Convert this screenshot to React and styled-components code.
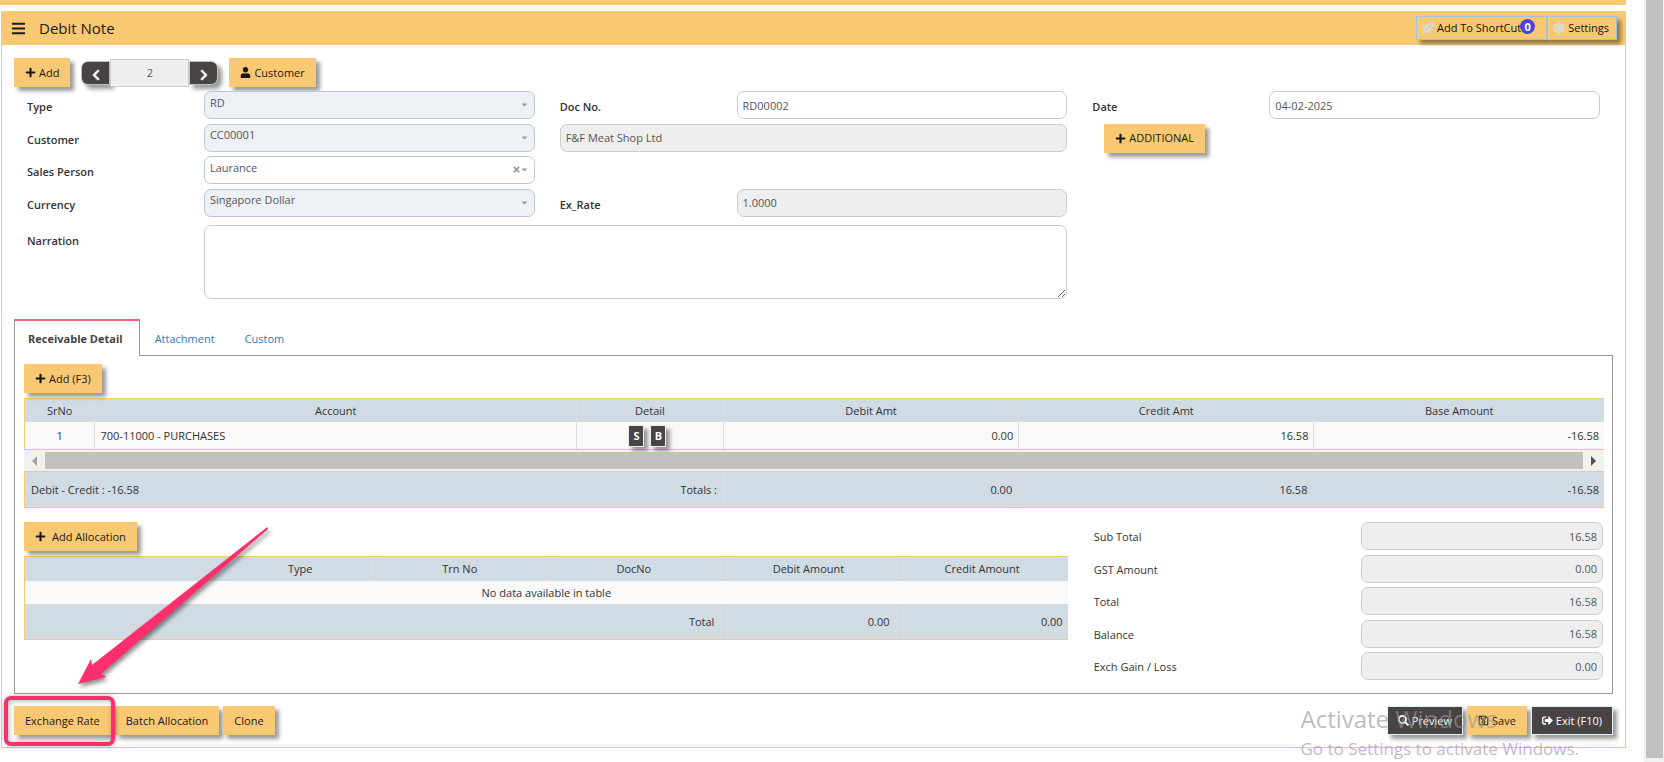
import React, { useState } from 'react';
import styled, { createGlobalStyle, css } from 'styled-components';
import {
  FaBars,
  FaPlus,
  FaUser,
  FaChevronLeft,
  FaChevronRight,
  FaCaretDown,
  FaTimes,
  FaSearch,
  FaRegSave,
  FaSignOutAlt,
} from 'react-icons/fa';
import { LuRocket, LuSettings } from 'react-icons/lu';

const amber = '#f9c872';
const dark = '#494444';

const tabs = ['Receivable Detail', 'Attachment', 'Custom'];

const detailColumns = [
  { title: 'SrNo', width: '4.4%' },
  { title: 'Account', width: '30.5%' },
  { title: 'Detail', width: '9.3%' },
  { title: 'Debit Amt', width: '18.7%' },
  { title: 'Credit Amt', width: '18.7%' },
  { title: 'Base Amount', width: '18.4%' },
];

const allocationColumns = [
  { title: '', width: '19.4%' },
  { title: 'Type', width: '13.9%' },
  { title: 'Trn No', width: '16.7%' },
  { title: 'DocNo', width: '16.7%' },
  { title: 'Debit Amount', width: '16.8%' },
  { title: 'Credit Amount', width: '16.5%' },
];

const detailRows = [
  { account: '700-11000 - PURCHASES', debit: '0.00', credit: '16.58', base: '-16.58' },
];

const summary = [
  { id: 'subTotal', label: 'Sub Total', value: '16.58' },
  { id: 'gstAmount', label: 'GST Amount', value: '0.00' },
  { id: 'total', label: 'Total', value: '16.58' },
  { id: 'balance', label: 'Balance', value: '16.58' },
  { id: 'exchGainLoss', label: 'Exch Gain / Loss', value: '0.00' },
];

const GlobalStyle = createGlobalStyle`
  *, *::before, *::after {
    box-sizing: border-box;
  }

  body {
    margin: 0;
    background: #fff;
    color: #333;
    font-family: "Open Sans", "Noto Sans", sans-serif;
    font-size: 11px;
    line-height: 16px;
  }

  button, input, select, textarea {
    font: inherit;
    color: inherit;
    margin: 0;
  }
`;

const Page = styled.div`
  position: relative;
  display: flex;
  justify-content: space-between;
  min-height: 100vh;
  overflow: hidden;
`;

const Main = styled.main`
  flex: 1;
  min-width: 0;
  margin-right: 18px;
`;

const TopStrip = styled.div`
  height: 5px;
  margin-bottom: 6px;
  background: ${amber};
`;

const Panel = styled.section`
  margin-left: 1px;
  border: 1px solid ${amber};
  border-top: 0;
`;

const PanelHeader = styled.header`
  display: flex;
  align-items: center;
  height: 34px;
  padding: 0 8px 0 9px;
  background: ${amber};
  color: #1a1a1a;
`;

const PanelTitle = styled.h1`
  flex: 1;
  margin: 0 0 0 13px;
  font-size: 15px;
  font-weight: 400;
  line-height: 20px;
`;

const HeaderButton = styled.button`
  position: relative;
  display: flex;
  align-items: center;
  gap: 3px;
  height: 24px;
  padding: 0 ${(p) => (p.$wide ? 25 : 7)}px 0 5px;
  border: 1px solid #9fc5dc;
  background: ${amber};
  color: #111;
  white-space: nowrap;
  box-shadow: 4px 4px 4px rgba(0, 0, 0, 0.4);

  svg {
    flex-shrink: 0;
    width: 12px;
    height: 12px;
    color: #cfe0ea;
    stroke-width: 3px;
  }
`;

const Badge = styled.span`
  position: absolute;
  top: 2px;
  right: 11px;
  width: 15px;
  height: 15px;
  border-radius: 50%;
  background: #4b45d6;
  color: #fff;
  font-weight: 700;
  line-height: 15px;
  text-align: center;
`;

const Button = styled.button`
  display: inline-flex;
  align-items: center;
  gap: ${(p) => (p.$spaced ? 6 : 3)}px;
  height: 29px;
  padding: 0 11px;
  border: 0;
  background: ${amber};
  color: #1a1a1a;
  white-space: nowrap;
  box-shadow: 4px 4px 4px rgba(0, 0, 0, 0.4);

  svg {
    width: 11px;
    height: 11px;
  }

  ${(p) =>
    p.$dark &&
    css`
      padding: 0 10px;
      border: 1px solid #e4eef4;
      background: ${dark};
      color: #fff;
    `}
`;

const Toolbar = styled.div`
  display: flex;
  align-items: center;
  gap: 11px;
  padding: 13px 12px 4px;
`;

const Pager = styled.div`
  display: flex;
  align-items: center;
`;

const PagerButton = styled.button`
  display: flex;
  align-items: center;
  justify-content: center;
  width: 29px;
  height: 24px;
  padding: 4px 0 0;
  border: 1px solid #b9c3d0;
  border-radius: ${(p) => (p.$next ? '0 7px 7px 0' : '7px 0 0 7px')};
  background: ${dark};
  color: #fff;
  box-shadow: 4px 4px 4px rgba(0, 0, 0, 0.4);

  svg {
    width: 12px;
    height: 12px;
    stroke: #fff;
    stroke-width: 30px;
  }
`;

const PagerInput = styled.input`
  position: relative;
  width: 79px;
  height: 28px;
  padding: 0;
  border: 1px solid #ccc;
  background: #eee;
  color: #555;
  text-align: center;
`;

const FormGrid = styled.div`
  display: grid;
  grid-template-columns: repeat(3, minmax(0, 152fr) minmax(0, 331fr));
  grid-template-rows: repeat(4, 1fr) auto;
  gap: 4px 25px;
  min-height: 208px;
  padding: 0 25px;
`;

const Label = styled.label`
  grid-column: ${(p) => p.$col};
  padding-top: ${(p) => (p.$low ? 12 : p.$light ? 7 : 8)}px;
  font-weight: ${(p) => (p.$light ? 500 : 600)};
`;

const fieldBox = css`
  width: 100%;
  height: 28px;
  border: 1px solid #ccc;
  border-radius: 7px;
  background: ${(p) => (p.readOnly ? '#eee' : '#fff')};
  color: #555;
`;

const TextField = styled.input`
  ${fieldBox}
  grid-column: ${(p) => p.$col || 'auto'};
  padding: 0 5px;
  text-align: ${(p) => p.$align || 'left'};
`;

const Narration = styled.textarea`
  ${fieldBox}
  grid-column: 2 / 5;
  display: block;
  height: 74px;
  margin-top: 4px;
  resize: vertical;
`;

const SelectBox = styled.div`
  position: relative;
`;

const Select = styled.select`
  ${fieldBox}
  padding: 0 24px 5px 5px;
  border-color: #bcc6d8;
  background: ${(p) => (p.$locked ? '#edf1f6' : '#fff')};
  appearance: none;
`;

const SelectMarks = styled.span`
  position: absolute;
  top: 9px;
  right: 7px;
  display: flex;
  align-items: center;
  gap: 1px;
  color: #999;
  pointer-events: none;

  svg {
    width: 7px;
    height: 9px;
  }
`;

const AdditionalCell = styled.div`
  grid-column: 5;
  height: 28px;
  margin-left: 12px;
`;

const Tabs = styled.nav`
  position: relative;
  display: flex;
  align-items: stretch;
  height: 36px;
  margin: 20px 12px 0;
`;

const Tab = styled.a`
  display: flex;
  align-items: center;
  margin-bottom: -1px;
  padding: 0 15px;
  border-top: 2px solid transparent;
  color: #337ab7;
  text-decoration: none;

  ${(p) =>
    p.$active &&
    css`
      padding: 0 16px 0 13px;
      border: 1px solid #999;
      border-top: 2px solid #ee6573;
      border-bottom: 0;
      background: #fff;
      color: #444;
      font-weight: 700;
    `}
`;

const TabPanel = styled.div`
  margin: 0 12px;
  padding: 8px 8px 13px 9px;
  border: 1px solid #999;
`;

const GridBox = styled.div`
  margin-top: 5px;
`;

const Table = styled.table`
  width: 100%;
  table-layout: fixed;
  border-collapse: separate;
  border-spacing: 0;
  border: 1px solid ${amber};
  border-right: 0;

  th, td {
    height: 27px;
    padding: 0 5px;
    border-left: 1px solid #ddd;
    text-align: right;
  }

  th:first-child, td:first-child {
    border-left: 0;
  }

  thead th {
    height: ${(p) => (p.$compact ? 24 : 23)}px;
    background: #d0dbe4;
    font-weight: 500;
    text-align: center;
  }

  tbody td {
    height: ${(p) => (p.$compact ? 23 : 27)}px;
    background: #f9f9f9;
  }

  tfoot td {
    height: 35px;
    padding: 0 6px;
    background: #d0dbe4;
    font-weight: 500;
  }

  tfoot td:last-child {
    padding-right: 5px;
  }
`;

const Cell = styled.td`
  && {
    text-align: ${(p) => p.$align};
  }
`;

const PlainCell = styled.td`
  && {
    border-left: 0;
  }
`;

const MiniButtons = styled.div`
  display: flex;
  justify-content: center;
  gap: 6px;
  padding-right: 5px;
`;

const MiniButton = styled.button`
  width: 16px;
  height: 22px;
  padding: 0;
  border: 1px solid #e8eef2;
  background: ${dark};
  color: #fff;
  font-weight: 700;
  line-height: 18px;
  box-shadow: 4px 4px 4px rgba(0, 0, 0, 0.4);
`;

const ScrollTrack = styled.div`
  display: flex;
  align-items: center;
  gap: 8px;
  height: 21px;
  padding: 0 8px;
  background: #f1f1f1;
`;

const ScrollArrow = styled.svg`
  width: 5px;
  height: 10px;
  fill: ${(p) => (p.$dim ? '#a3a3a3' : '#505050')};
`;

const ScrollThumb = styled.div`
  flex: 1;
  height: 17px;
  background: #c1c1c1;
`;

const LowerArea = styled.div`
  display: grid;
  grid-template-columns: minmax(0, 1043fr) minmax(0, 510fr);
  column-gap: 26px;
  margin-top: 14px;
`;

const Summary = styled.div`
  display: grid;
  grid-template-columns: minmax(0, 267fr) minmax(0, 242fr);
  align-content: space-between;
  min-height: 158px;
  padding-right: 1px;
`;

const Footer = styled.footer`
  display: flex;
  gap: 4px;
  padding: 12px;
`;

const Spacer = styled.div`
  flex: 1;
`;

const Highlighted = styled.div`
  position: relative;
  display: flex;
`;

// Marker frame drawn over the Exchange Rate button
const Frame = styled.span`
  position: absolute;
  inset: -10px -4px -11px -10px;
  border: 4px solid #ff2e6c;
  border-radius: 7px;
  pointer-events: none;
  box-shadow: 0 0 4px rgba(0, 0, 0, 0.3), inset 1px 1px 5px rgba(0, 0, 0, 0.3);
`;

const Arrow = styled.svg`
  position: absolute;
  left: 64px;
  bottom: 44px;
  width: 196px;
  height: 164px;
  overflow: visible;
  pointer-events: none;
  filter: drop-shadow(2px 3px 2px rgba(0, 0, 0, 0.45));
`;

const PageScroll = styled.div`
  display: flex;
  width: 20px;
  padding: 0 1px 4px 2px;
  background: #f1f1f1;
`;

const PageThumb = styled.div`
  flex: 1;
  background: #c1c1c1;
`;

const Watermark = styled.div`
  position: absolute;
  right: 85px;
  bottom: 3px;
  color: rgba(150, 150, 150, 0.65);
  font-size: 17px;
  line-height: 20px;
  white-space: nowrap;
  pointer-events: none;

  strong {
    display: block;
    margin-bottom: 4px;
    font-size: 24px;
    font-weight: 400;
    line-height: 32px;
  }
`;

const SelectField = ({ id, value, locked, clearable }) => (
  <SelectBox>
    <Select id={id} $locked={locked} defaultValue={value}>
      <option>{value}</option>
    </Select>
    <SelectMarks>
      {clearable && <FaTimes />}
      <FaCaretDown />
    </SelectMarks>
  </SelectBox>
);

const Columns = ({ columns }) => (
  <colgroup>
    {columns.map((c) => (
      <col key={c.title} width={c.width} />
    ))}
  </colgroup>
);

const TableHead = ({ columns }) => (
  <thead>
    <tr>
      {columns.map((c) => (
        <th key={c.title}>{c.title}</th>
      ))}
    </tr>
  </thead>
);

const DetailForm = () => (
  <FormGrid>
    <Label htmlFor="type" $col={1}>Type</Label>
    <SelectField id="type" value="RD" locked />
    <Label htmlFor="docNo" $col={3}>Doc No.</Label>
    <TextField id="docNo" defaultValue="RD00002" />
    <Label htmlFor="date" $col={5}>Date</Label>
    <TextField id="date" defaultValue="04-02-2025" />

    <Label htmlFor="customer" $col={1}>Customer</Label>
    <SelectField id="customer" value="CC00001" locked />
    <TextField aria-label="Customer name" $col="3 / 5" defaultValue="F&F Meat Shop Ltd" readOnly />
    <AdditionalCell>
      <Button type="button"><FaPlus />ADDITIONAL</Button>
    </AdditionalCell>

    <Label htmlFor="salesPerson" $col={1}>Sales Person</Label>
    <SelectField id="salesPerson" value="Laurance" clearable />

    <Label htmlFor="currency" $col={1}>Currency</Label>
    <SelectField id="currency" value="Singapore Dollar" locked />
    <Label htmlFor="exRate" $col={3}>Ex_Rate</Label>
    <TextField id="exRate" defaultValue="1.0000" readOnly />

    <Label htmlFor="narration" $col={1} $low>Narration</Label>
    <Narration id="narration" />
  </FormGrid>
);

const DetailTable = () => (
  <GridBox>
    <Table>
      <Columns columns={detailColumns} />
      <TableHead columns={detailColumns} />
      <tbody>
        {detailRows.map((row, i) => (
          <tr key={row.account}>
            <Cell $align="center">{i + 1}</Cell>
            <Cell $align="left">{row.account}</Cell>
            <Cell $align="center">
              <MiniButtons>
                <MiniButton type="button">S</MiniButton>
                <MiniButton type="button">B</MiniButton>
              </MiniButtons>
            </Cell>
            <td>{row.debit}</td>
            <td>{row.credit}</td>
            <td>{row.base}</td>
          </tr>
        ))}
      </tbody>
    </Table>
    <ScrollTrack>
      <ScrollArrow $dim viewBox="0 0 5 10"><path d="M5 0v10L0 5z" /></ScrollArrow>
      <ScrollThumb />
      <ScrollArrow viewBox="0 0 5 10"><path d="M0 0v10l5-5z" /></ScrollArrow>
    </ScrollTrack>
    <Table>
      <Columns columns={detailColumns} />
      <tfoot>
        <tr>
          <Cell $align="left" colSpan={2}>Debit - Credit : -16.58</Cell>
          <PlainCell>Totals :</PlainCell>
          <td>0.00</td>
          <td>16.58</td>
          <td>-16.58</td>
        </tr>
      </tfoot>
    </Table>
  </GridBox>
);

const AllocationTable = () => (
  <GridBox>
    <Table $compact>
      <Columns columns={allocationColumns} />
      <TableHead columns={allocationColumns} />
      <tbody>
        <tr>
          <Cell $align="center" colSpan={6}>No data available in table</Cell>
        </tr>
      </tbody>
      <tfoot>
        <tr>
          <td colSpan={4}>Total</td>
          <td>0.00</td>
          <td>0.00</td>
        </tr>
      </tfoot>
    </Table>
  </GridBox>
);

const App = () => {
  const [activeTab, setActiveTab] = useState(tabs[0]);

  return (
    <Page>
      <GlobalStyle />
      <Main>
        <TopStrip />
        <Panel>
          <PanelHeader>
            <FaBars size={15} />
            <PanelTitle>Debit Note</PanelTitle>
            <HeaderButton type="button" $wide>
              <LuRocket />Add To ShortCut
              <Badge>0</Badge>
            </HeaderButton>
            <HeaderButton type="button"><LuSettings />Settings</HeaderButton>
          </PanelHeader>

          <Toolbar>
            <Button type="button"><FaPlus />Add</Button>
            <Pager>
              <PagerButton type="button" aria-label="Previous"><FaChevronLeft /></PagerButton>
              <PagerInput aria-label="Record number" defaultValue="2" />
              <PagerButton type="button" aria-label="Next" $next><FaChevronRight /></PagerButton>
            </Pager>
            <Button type="button"><FaUser />Customer</Button>
          </Toolbar>

          <DetailForm />

          <Tabs>
            {tabs.map((tab) => (
              <Tab
                key={tab}
                href="#"
                $active={tab === activeTab}
                onClick={(e) => {
                  e.preventDefault();
                  setActiveTab(tab);
                }}
              >
                {tab}
              </Tab>
            ))}
          </Tabs>

          <TabPanel>
            <Button type="button"><FaPlus />Add (F3)</Button>
            <DetailTable />

            <LowerArea>
              <div>
                <Button type="button" $spaced><FaPlus />Add Allocation</Button>
                <AllocationTable />
              </div>
              <Summary>
                {summary.map((item) => (
                  <React.Fragment key={item.id}>
                    <Label htmlFor={item.id} $light>{item.label}</Label>
                    <TextField id={item.id} defaultValue={item.value} $align="right" readOnly />
                  </React.Fragment>
                ))}
              </Summary>
            </LowerArea>
          </TabPanel>

          <Footer>
            <Highlighted>
              <Button type="button">Exchange Rate</Button>
              <Frame />
              <Arrow viewBox="0 0 196 164">
                <path
                  d="M188 1Q190 -1 190 2L23 147L28 150L0 157L13 132L14 138Z"
                  fill="#ff2e6c"
                />
              </Arrow>
            </Highlighted>
            <Button type="button">Batch Allocation</Button>
            <Button type="button">Clone</Button>
            <Spacer />
            <Button type="button" $dark><FaSearch />Preview</Button>
            <Button type="button"><FaRegSave />Save</Button>
            <Button type="button" $dark><FaSignOutAlt />Exit (F10)</Button>
          </Footer>
        </Panel>
      </Main>
      <PageScroll>
        <PageThumb />
      </PageScroll>
      <Watermark>
        <strong>Activate Windows</strong>
        Go to Settings to activate Windows.
      </Watermark>
    </Page>
  );
};

export default App;
